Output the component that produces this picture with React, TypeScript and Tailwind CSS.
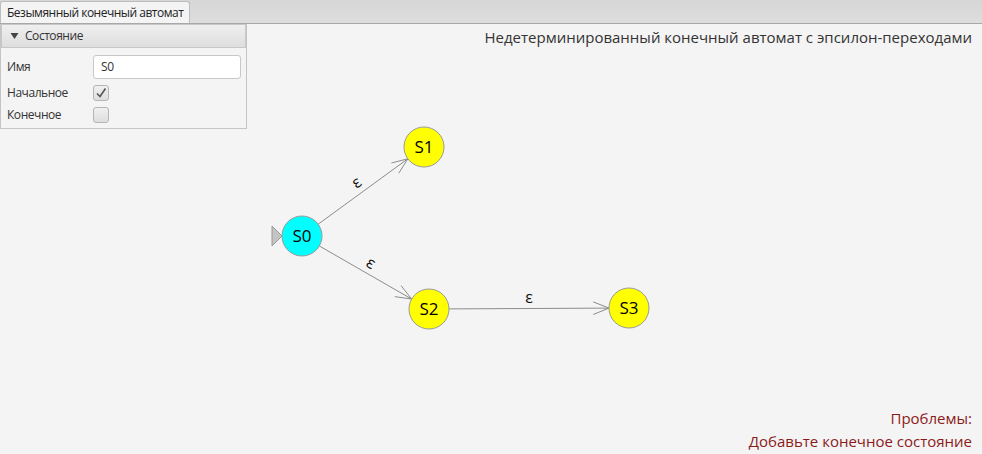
import React from 'react'

type Node = { id: string; x: number; y: number; fill: string }

// canvas coordinates (below the tab bar)
const nodes: Node[] = [
  { id: 'S0', x: 302, y: 212, fill: '#00ffff' },
  { id: 'S1', x: 424, y: 123, fill: '#ffff00' },
  { id: 'S2', x: 429, y: 285, fill: '#ffff00' },
  { id: 'S3', x: 629, y: 284, fill: '#ffff00' },
]

const edges = [
  { from: 'S0', to: 'S1', label: 'ε', rotate: true },
  { from: 'S0', to: 'S2', label: 'ε', rotate: true },
  { from: 'S2', to: 'S3', label: 'ε', rotate: false },
]

const R = 20

function Edge({ from, to, label, rotate }: { from: Node; to: Node; label: string; rotate: boolean }) {
  const dx = to.x - from.x
  const dy = to.y - from.y
  const len = Math.hypot(dx, dy)
  const ux = dx / len
  const uy = dy / len
  const x1 = from.x + ux * R
  const y1 = from.y + uy * R
  const x2 = to.x - ux * R
  const y2 = to.y - uy * R
  const a = Math.atan2(dy, dx)
  const head = 17
  const spread = 0.38
  const h1x = x2 - head * Math.cos(a - spread)
  const h1y = y2 - head * Math.sin(a - spread)
  const h2x = x2 - head * Math.cos(a + spread)
  const h2y = y2 - head * Math.sin(a + spread)
  const mx = (x1 + x2) / 2
  const my = (y1 + y2) / 2
  // label sits a bit above the line
  const lx = mx + uy * 10
  const ly = my - ux * 10
  const deg = rotate ? (a * 180) / Math.PI : 0
  return (
    <g>
      <line x1={x1} y1={y1} x2={x2} y2={y2} stroke="#8c8c8c" strokeWidth={1} />
      <polyline points={`${h1x},${h1y} ${x2},${y2} ${h2x},${h2y}`} fill="none" stroke="#8c8c8c" strokeWidth={1} />
      <text
        x={lx}
        y={ly}
        transform={`rotate(${deg} ${lx} ${ly})`}
        textAnchor="middle"
        dominantBaseline="middle"
        fontSize={16}
        fill="#111"
        fontFamily="'Open Sans', sans-serif"
      >
        {label}
      </text>
    </g>
  )
}

function Graph() {
  const byId = (id: string) => nodes.find((n) => n.id === id)!
  return (
    <svg className="absolute inset-0" width={982} height={430}>
      <polygon points="272,202 282,212 272,222" fill="#c4c4c4" stroke="#9a9a9a" strokeWidth={1} />
      {edges.map((e, i) => (
        <Edge key={i} from={byId(e.from)} to={byId(e.to)} label={e.label} rotate={e.rotate} />
      ))}
      {nodes.map((n) => (
        <g key={n.id}>
          <circle cx={n.x} cy={n.y} r={R} fill={n.fill} stroke="#9a9a9a" strokeWidth={1} />
          <text
            x={n.x}
            y={n.y + 1}
            textAnchor="middle"
            dominantBaseline="middle"
            fontSize={17}
            fill="#000"
            fontFamily="'Open Sans', sans-serif"
          >
            {n.id}
          </text>
        </g>
      ))}
    </svg>
  )
}

function Checkbox({ checked }: { checked?: boolean }) {
  return (
    <div className="w-[16px] h-[16px] rounded-[3px] border border-[#b5b5b5] bg-gradient-to-b from-[#f0f0f0] to-[#dedede] flex items-center justify-center">
      {checked && (
        <svg width="12" height="12" viewBox="0 0 12 12">
          <path d="M2 6.5 L5 9.5 L10.5 1.5" fill="none" stroke="#555" strokeWidth="1.6" />
        </svg>
      )}
    </div>
  )
}

function StatePanel() {
  return (
    <div className="w-[247px] border border-t-0 border-[#c4c4c4] bg-[#f4f4f4] text-[12px] tracking-[-0.45px] text-[#333]">
      <div className="h-[24px] flex items-center gap-[6px] pl-[8px] border border-[#c8c8c8] bg-gradient-to-b from-[#efefef] to-[#dedede] text-[#333]">
        <svg width="9" height="8" viewBox="0 0 9 8">
          <path d="M0.5 1 L8.5 1 L4.5 7 Z" fill="#444" />
        </svg>
        <span>Состояние</span>
      </div>
      <div className="pl-[6px] pr-[5px] pt-[7px] pb-[2px] flex flex-col">
        <div className="flex items-center h-[24px]">
          <span className="w-[86px]">Имя</span>
          <div className="flex-1 h-[24px] rounded-[3px] border border-[#c8c8c8] bg-white flex items-center px-[7px]">S0</div>
        </div>
        <div className="flex items-center h-[22px] mt-[3px]">
          <span className="w-[86px]">Начальное</span>
          <Checkbox checked />
        </div>
        <div className="flex items-center h-[22px]">
          <span className="w-[86px]">Конечное</span>
          <Checkbox />
        </div>
      </div>
    </div>
  )
}

export default function App() {
  return (
    <div className="w-[982px] h-[454px] flex flex-col bg-[#f4f4f4] overflow-hidden" style={{ fontFamily: "'Open Sans', sans-serif" }}>
      <div className="h-[24px] flex items-end bg-gradient-to-b from-[#d6d6d6] to-[#dedede] border-b border-[#a8a8a8]">
        <div className="h-[22px] px-[6px] flex items-center bg-[#f4f4f4] border border-b-0 border-[#bdbdbd] rounded-t-[3px] text-[12px] tracking-[-0.5px] text-[#222]">
          Безымянный конечный автомат
        </div>
      </div>
      <div className="relative flex-1 flex flex-col justify-between">
        <Graph />
        <div className="relative flex justify-between items-start">
          <StatePanel />
          <div className="pt-[2px] pr-[10px] text-[15px] text-[#333]">Недетерминированный конечный автомат с эпсилон-переходами</div>
        </div>
        <div className="relative flex flex-col items-end pr-[10px] pb-[1px] text-[15px] text-[#8b1a1a] leading-[23px]">
          <div>Проблемы:</div>
          <div>Добавьте конечное состояние</div>
        </div>
      </div>
    </div>
  )
}
